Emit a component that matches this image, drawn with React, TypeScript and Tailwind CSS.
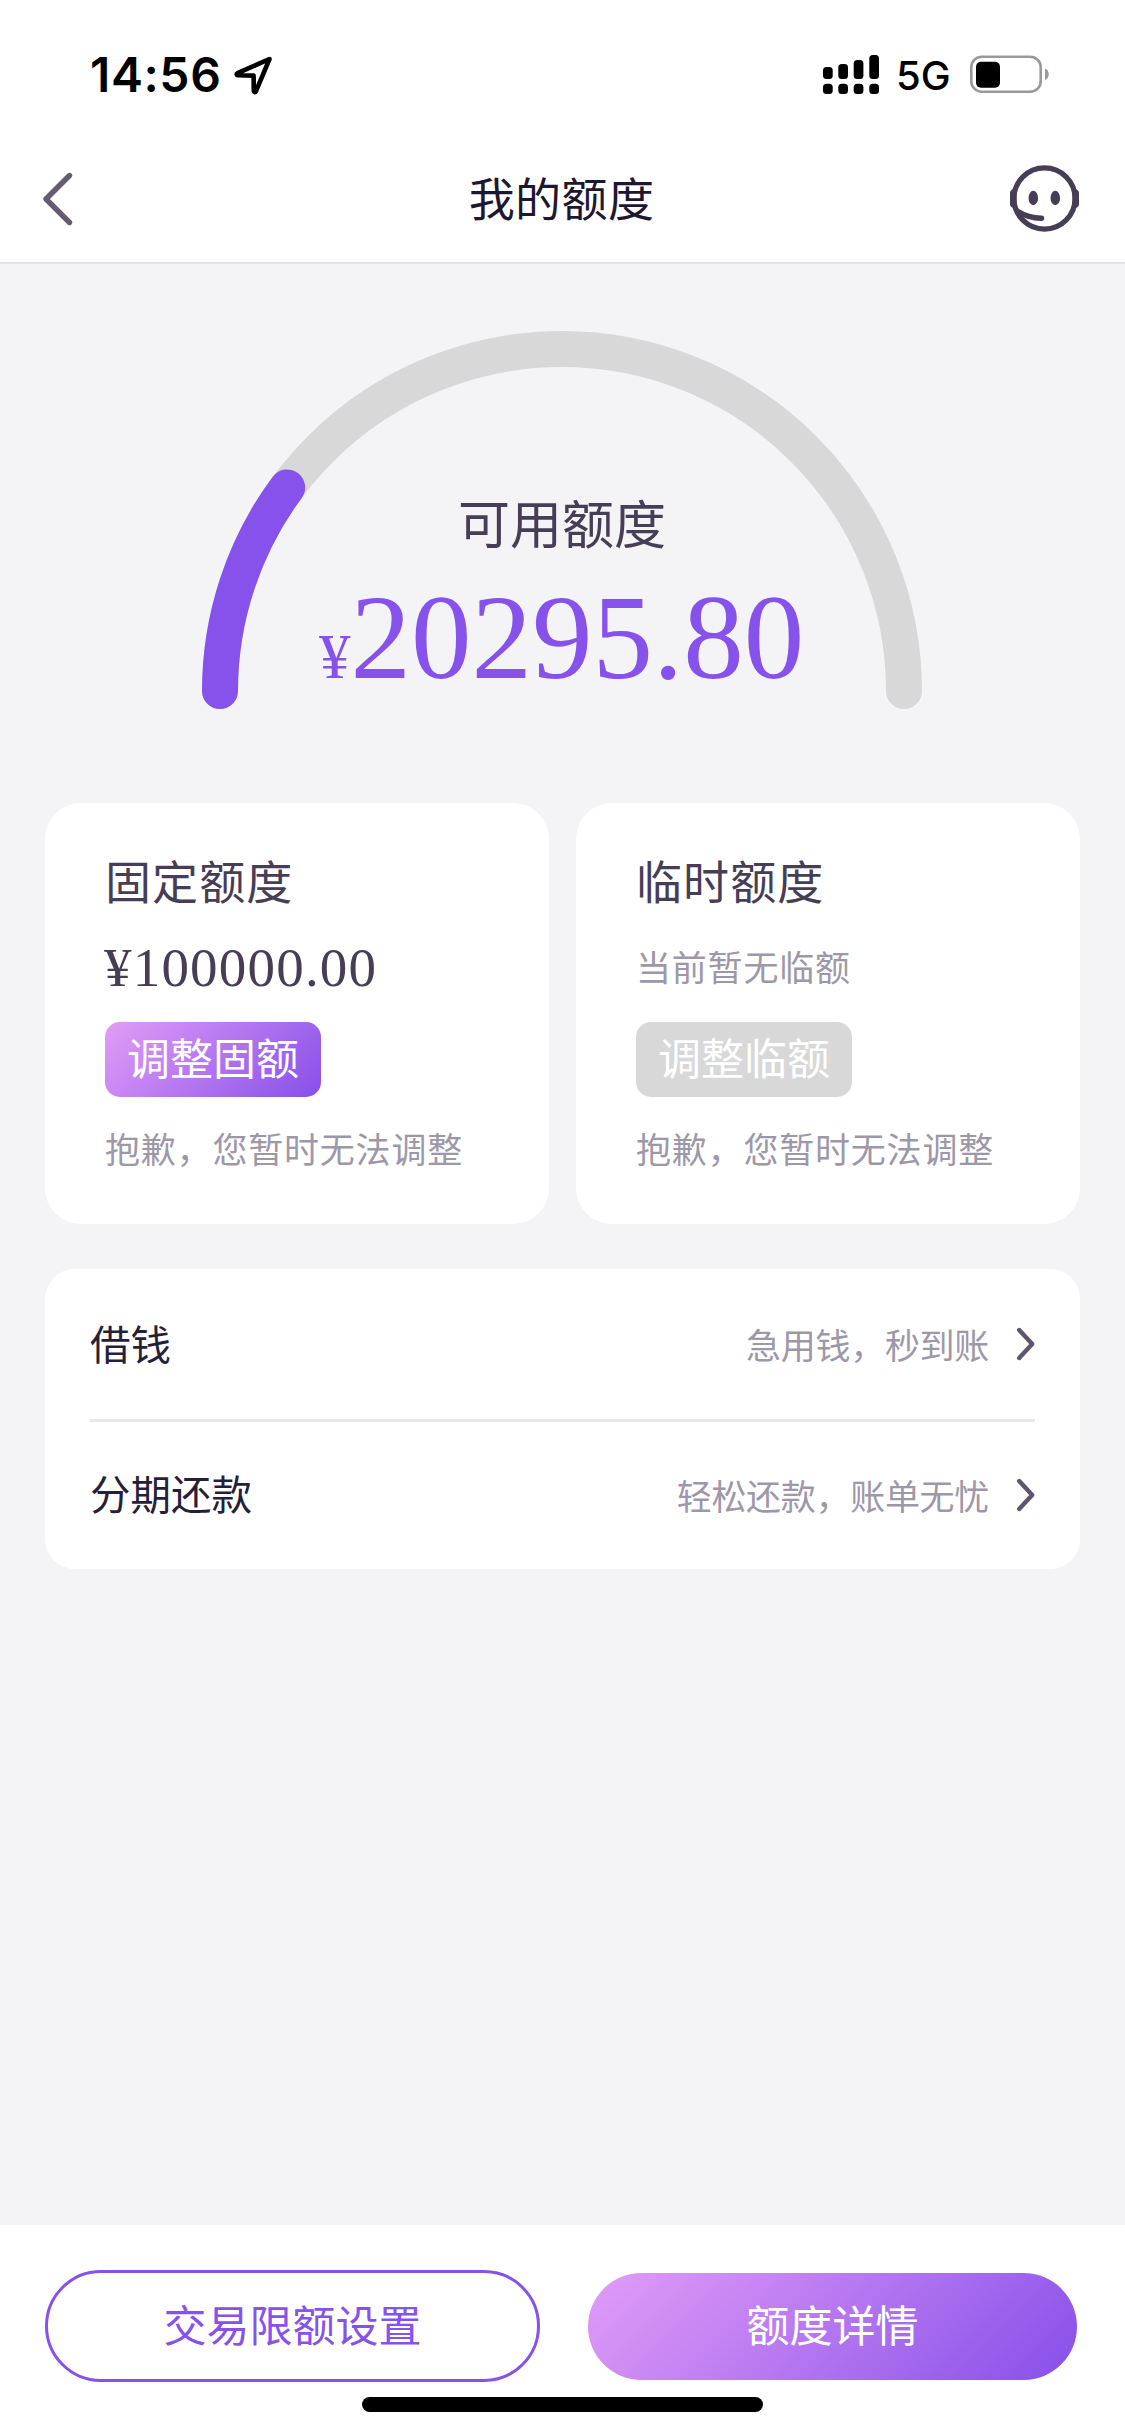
import { ReactNode } from "react";

// Circle radius 342, rounded caps, opening downwards
const GAUGE_RADIUS = 342;
const TOTAL_LIMIT = 100000;
const AVAILABLE = 20295.8;

const LINKS = [
  { title: "借钱", desc: "急用钱，秒到账" },
  { title: "分期还款", desc: "轻松还款，账单无忧" },
];

const StatusBar = () => {
  return (
    <div className="flex h-[135px] items-start justify-between pl-[90px] pr-[76px] text-black">
      <div className="flex items-center pt-[46px]">
        <span className="font-['Inter'] text-[48px] leading-[58px] font-semibold tracking-[0.6px]">
          14:56
        </span>
        <svg className="ml-[13px] h-[40px] w-[40px]" viewBox="0 0 40 40" fill="none">
          <path
            d="M35.5 4 L3.5 18.2 C2.2 19 2.6 20.3 4 20.3 L19.6 20.6 L19.8 36 C20 37.4 21.3 37.6 22 36.2 Z"
            stroke="currentColor"
            strokeWidth="4.6"
            strokeLinejoin="round"
          />
        </svg>
      </div>
      <div className="flex items-center pt-[53px]">
        <svg className="h-[41px] w-[56px]" viewBox="0 0 56 41" fill="currentColor">
          <rect x="0" y="13" width="9.7" height="12" rx="3.5" />
          <rect x="15.3" y="10" width="9.7" height="15" rx="3.5" />
          <rect x="30.7" y="6" width="9.7" height="19" rx="3.5" />
          <rect x="46.3" y="1" width="9.7" height="24" rx="3.5" />
          <rect x="0" y="29.7" width="9.7" height="10.3" rx="3.5" />
          <rect x="15.3" y="29.7" width="9.7" height="10.3" rx="3.5" />
          <rect x="30.7" y="29.7" width="9.7" height="10.3" rx="3.5" />
          <rect x="46.3" y="29.7" width="9.7" height="10.3" rx="3.5" />
        </svg>
        <span className="ml-[17px] w-[74px] pt-[2px] font-['Inter'] text-[40px] leading-[41px] font-medium">
          5G
        </span>
        <svg className="h-[41px] w-[79px]" viewBox="0 0 79 41">
          <rect x="1.3" y="2.7" width="69.4" height="35" rx="10.5" fill="none" stroke="#999" strokeWidth="2.6" />
          <rect x="6" y="7.7" width="24" height="26" rx="5" />
          <path d="M75 14.5 C80 16.5 80 24 75 26Z" fill="#999" />
        </svg>
      </div>
    </div>
  );
};

const NavBar = () => {
  return (
    <header className="flex h-[129px] items-center justify-between border-b-2 border-[#e4e4e6] pl-[42px] pr-[45px]">
      <svg className="h-[56px] w-[70px]" viewBox="0 0 70 56" fill="none">
        <path d="M27.5 4.5 L4 28 L27.5 51.5" stroke="#655b73" strokeWidth="5.4" strokeLinecap="round" strokeLinejoin="round" />
      </svg>
      <h1 className="pb-[6px] pl-px text-[46px] leading-[56px] tracking-[0.4px] text-[#1d1730]">我的额度</h1>
      <svg className="mb-px h-[70px] w-[70px]" viewBox="0 0 70 70" fill="none">
        <circle cx="34.5" cy="35.5" r="30.6" stroke="#463e54" strokeWidth="5.2" />
        <path d="M3.5 26 Q0 27 0 30 V41 Q0 44 3.5 45 L6.5 45 V26Z" fill="#463e54" />
        <path d="M65.5 26 Q69 27 69 30 V41 Q69 44 65.5 45 L62.5 45 V26Z" fill="#463e54" />
        <ellipse cx="23.3" cy="35" rx="4.8" ry="7.2" fill="#463e54" />
        <ellipse cx="45.3" cy="35" rx="4.8" ry="7.2" fill="#463e54" />
        <path d="M8 48.5 Q18 55 31.5 55.3" stroke="#463e54" strokeWidth="5.6" strokeLinecap="round" />
      </svg>
    </header>
  );
};

const Gauge = () => {
  const angle = Math.PI * (AVAILABLE / TOTAL_LIMIT);
  const endX = 360 - GAUGE_RADIUS * Math.cos(angle);
  const endY = 360 - GAUGE_RADIUS * Math.sin(angle);

  return (
    <div className="relative mx-auto mt-[67px] h-[379px] w-[721px] pr-px">
      <svg className="h-full w-[720px]" viewBox="0 0 720 379" fill="none" strokeWidth="36" strokeLinecap="round">
        <path d="M18 360 A342 342 0 0 1 702 360" stroke="#d8d8d8" />
        <path d={`M18 360 A342 342 0 0 1 ${endX} ${endY}`} stroke="#8751eb" />
      </svg>
      <div className="absolute inset-x-0 top-[161px] flex flex-col items-center">
        <div className="pr-px text-[52px] leading-[60px] text-[#463e54]">可用额度</div>
        <div className="mt-[15px] pr-[2px] font-['Liberation_Serif'] leading-[140px] whitespace-nowrap text-[#8751eb]">
          <span className="text-[63px]">¥</span>
          <span className="text-[121px]">20295.80</span>
        </div>
      </div>
    </div>
  );
};

type LimitCardProps = {
  title: string;
  action: string;
  disabled?: boolean;
  children: ReactNode;
};

const LimitCard = ({ title, action, disabled, children }: LimitCardProps) => {
  return (
    <div className="flex h-[421px] flex-1 flex-col items-start rounded-[36px] bg-white pl-[60px] pt-[46px]">
      <h2 className="text-[46px] leading-[60px] tracking-[1.1px] text-[#463e54]">{title}</h2>
      <div className="mt-[23px] flex h-[70px] items-center">{children}</div>
      <button
        className={
          disabled
            ? "mt-[20px] h-[75px] w-[216px] rounded-[15px] bg-[#d8d8d8] pb-[6px] text-[43px] leading-[69px] text-white"
            : "mt-[20px] h-[75px] w-[216px] rounded-[15px] bg-[linear-gradient(135deg,#e29df7,#864fe9)] pb-[6px] text-[43px] leading-[69px] text-white"
        }
      >
        {action}
      </button>
      <p className="mt-[30px] text-[35px] leading-[42px] tracking-[0.8px] text-[#9d98a8]">
        抱歉，您暂时无法调整
      </p>
    </div>
  );
};

export default function App() {
  return (
    <div className="flex h-[2435px] w-[1125px] flex-col bg-[#f4f4f7] font-['Noto_Sans_CJK_SC',sans-serif]">
      <div className="bg-white">
        <StatusBar />
        <NavBar />
      </div>

      <main className="flex-1">
        <Gauge />

        {/* Limit cards */}
        <div className="mx-[45px] mt-[93px] flex gap-[27px]">
          <LimitCard title="固定额度" action="调整固额">
            <span className="-ml-px pt-[2px] font-['Liberation_Serif'] text-[55px] leading-[70px] tracking-[1.2px] text-[#463e54]">
              ¥100000.00
            </span>
          </LimitCard>
          <LimitCard title="临时额度" action="调整临额" disabled>
            <span className="pb-[3px] text-[35px] leading-[67px] tracking-[0.8px] text-[#9d98a8]">当前暂无临额</span>
          </LimitCard>
        </div>

        {/* Service links */}
        <div className="mx-[45px] mt-[45px] h-[300px] divide-y-3 divide-[#e9e9eb] rounded-[30px] bg-white px-[45px]">
          {LINKS.map((link) => (
            <div key={link.title} className="flex h-[153px] items-center last:h-[147px] last:pb-[2px]">
              <span className="pb-[3px] text-[40.5px] leading-[60px] text-[#261f38]">{link.title}</span>
              <span className="ml-auto text-[35px] leading-[60px] tracking-[-0.3px] text-[#9d98a8]">
                {link.desc}
              </span>
              <svg className="ml-[27px] h-[34px] w-[19px]" viewBox="0 0 19 34" fill="none">
                <path d="M3.2 3 L16.2 17 L3.2 31" stroke="#5f566d" strokeWidth="4.4" strokeLinecap="round" strokeLinejoin="round" />
              </svg>
            </div>
          ))}
        </div>
      </main>

      {/* Bottom actions */}
      <footer className="h-[210px] bg-white pt-[45px]">
        <div className="flex h-[112px] items-center justify-between pl-[45px] pr-[48px]">
          <button className="h-[112px] w-[495px] rounded-full border-3 border-[#8751eb] pb-[5px] text-[43px] text-[#8751eb]">
            交易限额设置
          </button>
          <button className="h-[107px] w-[489px] rounded-full bg-[linear-gradient(135deg,#e29df7,#864fe9)] pb-[5px] text-[43px] text-white">
            额度详情
          </button>
        </div>
        <div className="mx-auto mt-[15px] h-[15px] w-[401px] rounded-full bg-black" />
      </footer>
    </div>
  );
}
